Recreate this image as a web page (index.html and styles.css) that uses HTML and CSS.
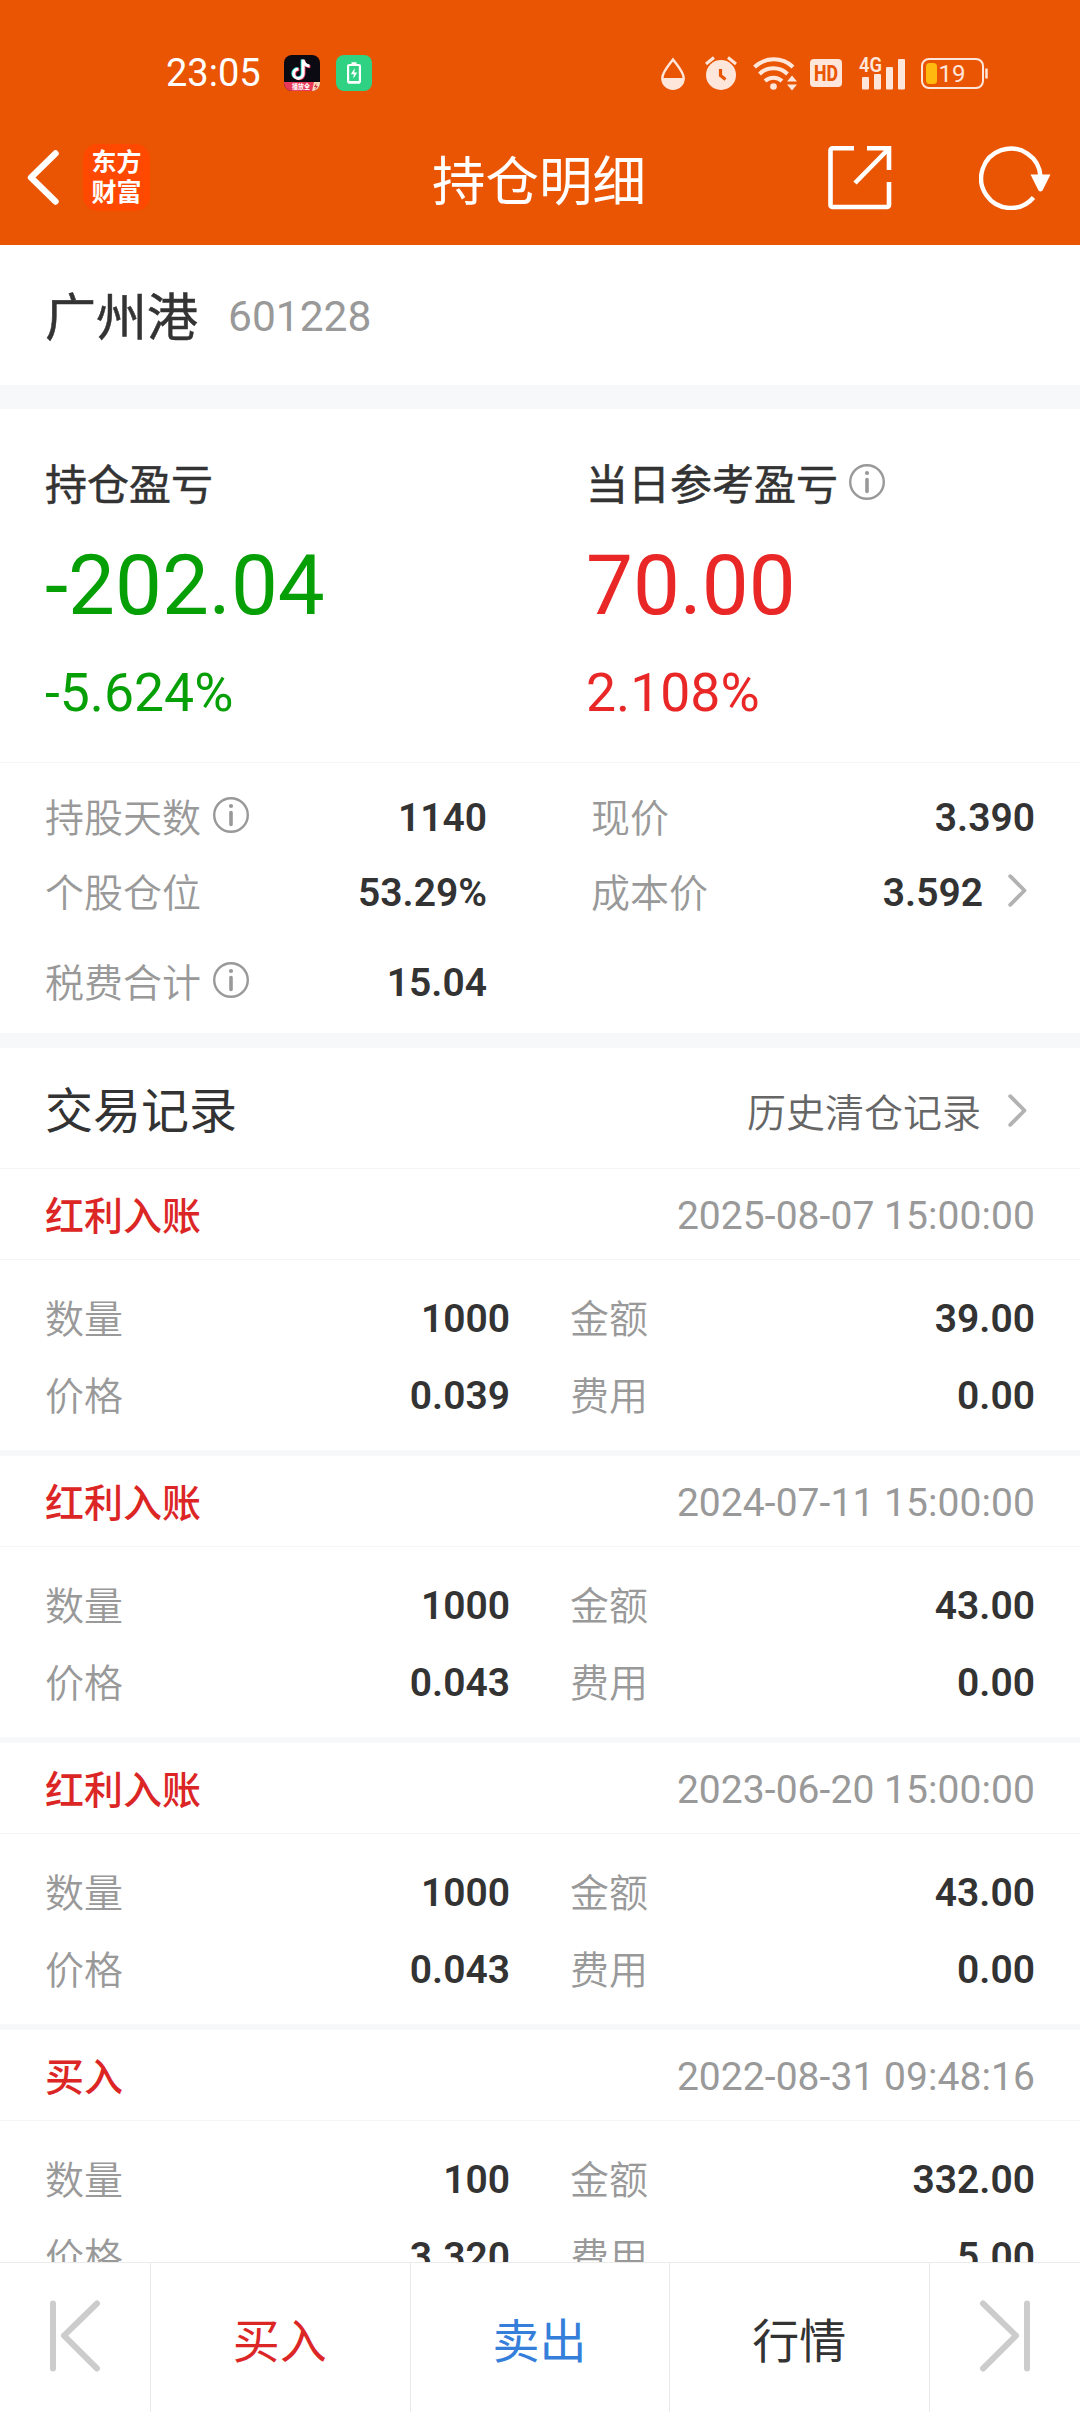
FILE: index.html
```html
<!DOCTYPE html>
<html lang="zh-CN">
<head>
  <meta charset="UTF-8" />
  <title>持仓明细</title>
  <link rel="stylesheet" href="styles.css">
</head>
<body>
  <!-- shared icons -->
  <svg class="defs" width="0" height="0">
    <symbol id="info" viewBox="0 0 36 36">
      <circle cx="18" cy="18" r="16.8" fill="none" stroke="#999" stroke-width="2.4"/>
      <circle cx="18" cy="9" r="2.1" fill="#999"/>
      <path d="M18 15.5V27.5" stroke="#999" stroke-width="3.6" stroke-linecap="round"/>
    </symbol>
    <symbol id="arrow" viewBox="0 0 19 33">
      <path d="M2.2 2.2L16.5 16.5L2.2 30.8" fill="none" stroke="#b2b2b2" stroke-width="3.8" stroke-linecap="round" stroke-linejoin="round"/>
    </symbol>
  </svg>

  <div class="page">
    <header class="header">
      <div class="status-bar">
        <div class="status-left">
          <span class="time">23:05</span>
          <svg width="36" height="36" viewBox="0 0 36 36">
            <clipPath id="appClip"><rect width="36" height="36" rx="8"/></clipPath>
            <g clip-path="url(#appClip)">
              <rect width="36" height="36" fill="#0b0912"/>
              <rect y="27" width="36" height="9" fill="#e8395a"/>
              <path d="M30 27h6v9h-8z" fill="#fbd9b5"/>
              <path d="M32.5 28l-2.5 4h2l-1 3 3-4h-2z" fill="#c8324a"/>
              <text x="8" y="34" class="app-tag" textLength="18" lengthAdjust="spacingAndGlyphs">播放全</text>
            </g>
            <g fill="none" stroke-width="3">
              <path d="M18.200 4.500v13.800a4.700 4.700 0 1 1-4.700-4.700M18.200 5c.6 3.700 3 5.500 6.400 5.800" stroke="#25e5e0"/>
              <path d="M20 5.300v13.800a4.700 4.700 0 1 1-4.700-4.700M20 6c.6 3.700 3 5.500 6.400 5.800" stroke="#f03a5c"/>
              <path d="M19.100 4.500v14.200a4.700 4.700 0 1 1-4.700-4.700M19.100 5c.6 3.700 3 5.700 6.400 6" stroke="#fff"/>
            </g>
          </svg>
          <svg width="36" height="36" viewBox="0 0 36 36">
            <rect width="36" height="36" rx="8" fill="#2fd183"/>
            <rect x="12.100" y="10" width="11.800" height="17.500" rx="1" fill="none" stroke="#fff" stroke-width="2.200"/>
            <path d="M15.500 7.300h5v2h-5z M12 26h12v2.500h-12z" fill="#fff"/>
            <path d="M18.800 13l-4 6.300h3l-.5 4.500 4-6.300h-3z" fill="#fff"/>
          </svg>
        </div>
        <div class="status-right">
          <svg class="ic-drop" width="26" height="35" viewBox="660 55 26 35">
            <path d="M673 58.500C669 64 662.300 71 662.300 77a10.700 10.700 0 0 0 21.400 0C683.700 71 677 64 673 58.500z" fill="none" stroke="#ffe6da" stroke-width="2.400"/>
            <path d="M662 77h22a11 11 0 0 1-22 0z" fill="#ffe6da"/>
          </svg>
          <svg class="ic-alarm" width="34" height="35" viewBox="704 55 34 35">
            <circle cx="721" cy="74" r="15" fill="#ffe6da"/>
            <path d="M706 63l8-6.500M736 63l-8-6.500" stroke="#ffe6da" stroke-width="3"/>
            <path d="M720.500 68v6.500l5 4" fill="none" stroke="#ea5504" stroke-width="3.200"/>
          </svg>
          <svg class="ic-wifi" width="45" height="35" viewBox="753 54 45 35">
            <g fill="none" stroke="#ffe6da" stroke-width="4">
              <path d="M754.500 65a28 28 0 0 1 38.500 0"/>
              <path d="M759.500 72a20 20 0 0 1 28 0"/>
              <path d="M765 79a12.500 12.500 0 0 1 17 0"/>
            </g>
            <circle cx="773.500" cy="84.500" r="3.300" fill="#ffe6da"/>
            <path d="M787 79.500l5-6 5 6zM787 82.500l5 6 5-6z" fill="#ffe6da"/>
          </svg>
          <svg class="ic-hd" width="32" height="28" viewBox="0 0 32 28">
            <rect width="32" height="28" rx="4" fill="#ffe6da"/>
            <text x="4" y="21.500" class="hd" textLength="24" lengthAdjust="spacingAndGlyphs">HD</text>
          </svg>
          <svg class="ic-signal" width="47" height="37" viewBox="859 53 47 37">
            <text x="859" y="70" class="net" textLength="23" lengthAdjust="spacingAndGlyphs">4G</text>
            <g fill="#ffe6da">
              <rect x="862" y="75" width="7" height="12.500" rx="1"/>
              <rect x="874" y="72" width="7" height="15.500" rx="1"/>
              <rect x="886" y="65" width="7" height="22.500" rx="1"/>
              <rect x="898" y="57" width="7" height="30.500" rx="1"/>
            </g>
          </svg>
          <svg class="ic-battery" width="68" height="33" viewBox="920 56 68 33">
            <rect x="922" y="58" width="61" height="29" rx="7" fill="none" stroke="#ffe6da" stroke-width="2"/>
            <path d="M986.500 67.500v10" stroke="#ffe6da" stroke-width="2.500"/>
            <rect x="926" y="62" width="11" height="21" rx="3.500" fill="#ffb90f"/>
            <text x="938.500" y="81" class="level">19</text>
          </svg>
        </div>
      </div>

      <div class="nav">
        <div class="nav-left">
          <svg width="32" height="55" viewBox="0 0 32 55">
            <path d="M28.500 3.500L4 27.500L28.500 51.500" fill="none" stroke="#fff" stroke-width="6.400" stroke-linecap="round" stroke-linejoin="round"/>
          </svg>
          <div class="logo"><span>东方</span><span>财富</span></div>
        </div>
        <h1>持仓明细</h1>
        <div class="nav-right">
          <svg width="64" height="64" viewBox="0 0 64 64" fill="none" stroke="#fff" stroke-width="4.600">
            <path d="M26 2.300H4.500a2 2 0 0 0-2 2V59a2 2 0 0 0 2 2H59a2 2 0 0 0 2-2V36"/>
            <path d="M39 2.300H61V24M60 3.500L27 37"/>
          </svg>
          <svg width="72" height="64" viewBox="0 0 72 64">
            <path d="M61.500 30.500A29.700 29.700 0 1 0 54.500 51.500" fill="none" stroke="#fff" stroke-width="4.400"/>
            <path d="M51.500 28.500H71.500L63.500 44.500Q61.500 46.500 59.500 44.500z" fill="#fff"/>
          </svg>
        </div>
      </div>
    </header>

    <section class="stock">
      <span class="stock-name">广州港</span>
      <span class="stock-code">601228</span>
    </section>

    <section class="profit">
      <div class="profit-col green">
        <div class="profit-label">持仓盈亏</div>
        <div class="profit-num">-202.04</div>
        <div class="profit-pct">-5.624%</div>
      </div>
      <div class="profit-col red">
        <div class="profit-label">当日参考盈亏<svg class="info"><use href="#info"/></svg></div>
        <div class="profit-num">70.00</div>
        <div class="profit-pct">2.108%</div>
      </div>
    </section>

    <section class="stats">
      <div class="stats-row">
        <div class="cell"><span class="label">持股天数</span><svg class="info"><use href="#info"/></svg><b>1140</b></div>
        <div class="cell"><span class="label">现价</span><b>3.390</b></div>
      </div>
      <div class="stats-row">
        <div class="cell"><span class="label">个股仓位</span><b>53.29%</b></div>
        <div class="cell"><span class="label">成本价</span><b>3.592</b><svg class="arrow"><use href="#arrow"/></svg></div>
      </div>
      <div class="stats-row last">
        <div class="cell"><span class="label">税费合计</span><svg class="info"><use href="#info"/></svg><b>15.04</b></div>
        <div class="cell"></div>
      </div>
    </section>

    <section class="trades">
      <div class="trades-head">
        <h2>交易记录</h2>
        <a class="history">历史清仓记录<svg class="arrow"><use href="#arrow"/></svg></a>
      </div>

      <div class="record">
        <div class="record-head"><span class="type">红利入账</span><span class="date">2025-08-07 15:00:00</span></div>
        <div class="record-body">
          <div class="item"><span class="label">数量</span><b>1000</b></div>
          <div class="item"><span class="label">金额</span><b>39.00</b></div>
          <div class="item"><span class="label">价格</span><b>0.039</b></div>
          <div class="item"><span class="label">费用</span><b>0.00</b></div>
        </div>
      </div>

      <div class="record">
        <div class="record-head"><span class="type">红利入账</span><span class="date">2024-07-11 15:00:00</span></div>
        <div class="record-body">
          <div class="item"><span class="label">数量</span><b>1000</b></div>
          <div class="item"><span class="label">金额</span><b>43.00</b></div>
          <div class="item"><span class="label">价格</span><b>0.043</b></div>
          <div class="item"><span class="label">费用</span><b>0.00</b></div>
        </div>
      </div>

      <div class="record">
        <div class="record-head"><span class="type">红利入账</span><span class="date">2023-06-20 15:00:00</span></div>
        <div class="record-body">
          <div class="item"><span class="label">数量</span><b>1000</b></div>
          <div class="item"><span class="label">金额</span><b>43.00</b></div>
          <div class="item"><span class="label">价格</span><b>0.043</b></div>
          <div class="item"><span class="label">费用</span><b>0.00</b></div>
        </div>
      </div>

      <div class="record">
        <div class="record-head"><span class="type">买入</span><span class="date">2022-08-31 09:48:16</span></div>
        <div class="record-body">
          <div class="item"><span class="label">数量</span><b>100</b></div>
          <div class="item"><span class="label">金额</span><b>332.00</b></div>
          <div class="item"><span class="label">价格</span><b>3.320</b></div>
          <div class="item"><span class="label">费用</span><b>5.00</b></div>
        </div>
      </div>
    </section>

    <footer class="bottom-bar">
      <div class="tab-edge">
        <svg width="52" height="72" viewBox="0 0 52 72" fill="none" stroke="#ccc" stroke-width="6" stroke-linecap="round" stroke-linejoin="round">
          <path d="M4 3.500V68.500M48 3.500L15 35.700L48 68.500"/>
        </svg>
      </div>
      <div class="tab buy">买入</div>
      <div class="tab sell">卖出</div>
      <div class="tab">行情</div>
      <div class="tab-edge">
        <svg width="52" height="72" viewBox="0 0 52 72" fill="none" stroke="#ccc" stroke-width="6" stroke-linecap="round" stroke-linejoin="round">
          <path d="M48 3.500V68.500M4 3.500L37 35.700L4 68.500"/>
        </svg>
      </div>
    </footer>
  </div>
</body>
</html>
```

FILE: styles.css
```css
* {
  box-sizing: border-box;
}

body {
  margin: 0;
  font-family: Roboto, "Noto Sans CJK SC", sans-serif;
  font-size: 39px;
  color: #333;
  background-color: #fff;
}

svg {
  display: block;
  flex-shrink: 0;
}

.defs {
  position: absolute;
}

.page {
  width: 1080px;
  height: 2412px;
  display: flex;
  flex-direction: column;
  overflow: hidden;
}

/* header */
.header {
  height: 245px;
  flex-shrink: 0;
  background-color: #ea5504;
  color: #fff;
}

.status-bar {
  display: flex;
  justify-content: space-between;
  height: 96px;
  padding: 50px 92px 0 166px;
}

.status-left, .status-right {
  display: flex;
  align-items: center;
  height: 46px;
}

.status-left {
  gap: 16px;
}

.time {
  width: 102px;
  font-size: 38px;
  line-height: 46px;
}

.app-tag {
  font-size: 6.5px;
  font-weight: 700;
  fill: #fff;
}

.ic-alarm {
  margin-left: 18px;
}

.ic-wifi {
  margin-left: 15px;
}

.ic-hd {
  margin-left: 12px;
}

.hd {
  font-size: 22px;
  font-weight: 800;
  fill: #ea5504;
}

.ic-signal {
  margin-left: 17px;
}

.net {
  font-size: 21px;
  font-weight: 600;
  fill: #ffe6da;
}

.ic-battery {
  margin-left: 14px;
}

.level {
  font-size: 24px;
  fill: #ffe6da;
}

.nav {
  display: grid;
  grid-template-columns: 1fr auto 1fr;
  align-items: center;
  height: 149px;
  padding: 14px 29px 0 27px;
}

.nav-left, .nav-right {
  display: flex;
  align-items: center;
}

.nav-left {
  gap: 24px;
}

.nav-right {
  justify-content: flex-end;
  gap: 87px;
}

.logo {
  display: flex;
  flex-direction: column;
  width: 67px;
  height: 67px;
  padding-top: 4px;
  border-radius: 15px;
  background-color: #ff4800;
  font-size: 25px;
  font-weight: 700;
  line-height: 30px;
  text-align: center;
}

.nav h1 {
  margin: 0;
  padding-top: 10px;
  font-size: 53.5px;
  font-weight: 400;
  line-height: 70px;
}

/* stock name */
.stock {
  display: flex;
  align-items: center;
  height: 140px;
  flex-shrink: 0;
  padding-left: 45px;
}

.stock-name {
  padding-top: 8px;
  font-size: 51px;
  font-weight: 400;
  line-height: 60px;
  -webkit-text-stroke: 0.5px #333;
}

.stock-code {
  margin-left: 30px;
  padding-top: 3px;
  font-size: 42.5px;
  line-height: 50px;
  color: #999;
}

/* profit and loss */
.profit {
  display: flex;
  flex-shrink: 0;
  height: 378px;
  padding: 47px 45px 0;
  border-top: 24px solid #f6f8fa;
  border-bottom: 1px solid #f5f5f5;
}

.profit-col {
  flex: 1;
}

.profit-col:first-child {
  flex: 0 0 541px;
}

.profit-label {
  display: flex;
  font-size: 42px;
  line-height: 60px;
  color: #333;
  -webkit-text-stroke: 0.5px #333;
}

.profit-label .info {
  margin: 8px 0 0 11px;
}

.profit-num {
  margin-top: 20px;
  font-size: 83.5px;
  line-height: 100px;
}

.profit-pct {
  margin-top: 27px;
  font-size: 53.5px;
  line-height: 60px;
}

.green {
  color: #069f06;
}

.red {
  color: #e92727;
}

.info {
  width: 36px;
  height: 36px;
}

.arrow {
  width: 19px;
  height: 33px;
}

.label {
  padding-top: 1px;
  color: #999;
  font-weight: 350;
}

b {
  margin-left: auto;
  font-weight: 600;
}

/* holding stats */
.stats {
  flex-shrink: 0;
  height: 285px;
  padding: 18px 45px 0;
  border-bottom: 15px solid #f6f8fa;
}

.stats-row {
  display: flex;
  justify-content: space-between;
  height: 75px;
  line-height: 75px;
}

.stats-row.last {
  margin-top: 15px;
}

.cell {
  display: flex;
  width: 442px;
}

.cell:last-child {
  width: 444px;
}

.cell .info {
  margin: 16px 0 0 12px;
}

.cell .arrow {
  margin: 18px 8px 0 25px;
}

/* trade records */
.trades {
  flex: 1;
  min-height: 0;
  overflow: hidden;
}

.trades-head {
  display: flex;
  justify-content: space-between;
  height: 121px;
  padding: 0 53px 0 45px;
  border-bottom: 1px solid #f5f5f5;
}

.trades-head h2 {
  margin: 0;
  font-size: 48px;
  font-weight: 400;
  line-height: 127px;
}

.history {
  display: flex;
  color: #666;
  font-weight: 350;
  line-height: 133px;
}

.history .arrow {
  margin: 46px 0 0 27px;
}

.record {
  height: 287px;
  border-bottom: 6px solid #f6f8fa;
}

.record-head {
  display: flex;
  justify-content: space-between;
  height: 91px;
  padding: 0 45px;
  border-bottom: 1px solid #f5f5f5;
  line-height: 94px;
}

.type {
  padding-top: 1px;
  color: #dc2626;
  font-weight: 500;
}

.date {
  color: #999;
  letter-spacing: 0.06px;
}

.record-body {
  display: grid;
  grid-template-columns: 465px 465px;
  grid-auto-rows: 77px;
  column-gap: 60px;
  padding: 21px 45px 0;
}

.item {
  display: flex;
  line-height: 77px;
}

/* bottom bar */
.bottom-bar {
  display: flex;
  height: 150px;
  flex-shrink: 0;
  border-top: 1px solid #ebebeb;
  background-color: #fff;
}

.tab-edge {
  display: flex;
  align-items: center;
  justify-content: center;
  width: 150px;
  padding-bottom: 4px;
}

.tab {
  flex: 1;
  padding-right: 1px;
  border-left: 1px solid #ebebeb;
  font-size: 47px;
  line-height: 157px;
  text-align: center;
}

.tab:nth-child(4) {
  border-right: 1px solid #ebebeb;
}

.buy {
  color: #dc2626;
}

.sell {
  color: #357fdb;
}
```
